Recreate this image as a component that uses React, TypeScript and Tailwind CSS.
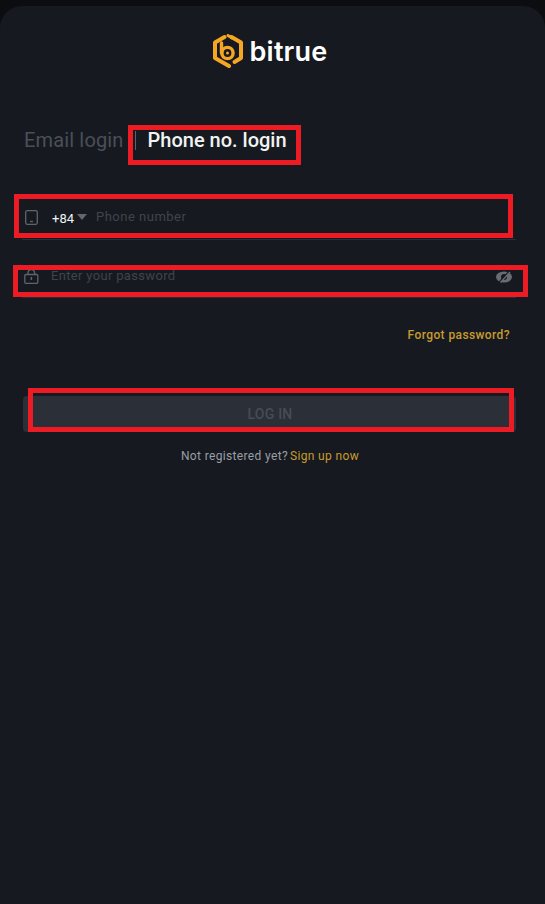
import React from "react";

const Logo = () => (
  <svg width="30" height="34" viewBox="0 0 30 34" fill="none">
    <path d="M11.500 3 L2 8.500 V24 L16 32" stroke="#f5a623" strokeWidth="4" strokeLinejoin="round" strokeLinecap="round" />
    <path d="M18.500 3 L28 8.500 V24 L21.500 28" stroke="#f5a623" strokeWidth="4" strokeLinejoin="round" strokeLinecap="round" />
    <path d="M15 1.500 L19 4" stroke="#f5a623" strokeWidth="3" strokeLinecap="round" />
    <path d="M8.500 9 V19" stroke="#f5a623" strokeWidth="3.400" strokeLinecap="round" />
    <circle cx="14.500" cy="19" r="5.600" stroke="#f5a623" strokeWidth="3.400" />
    <circle cx="14.500" cy="19" r="1.500" fill="#f5a623" />
  </svg>
);

const RedBox = ({ className }: { className: string }) => (
  <div className={`pointer-events-none absolute border-[5px] border-[#ed1c24] ${className}`} />
);

export default function App() {
  return (
    <div className="relative h-[904px] w-[545px] overflow-hidden bg-[#0c0d11] pt-[6px] font-['Roboto',sans-serif]">
      <div className="flex h-[898px] flex-col rounded-t-[22px] bg-[#161a20]">
        <div className="flex h-[62px] items-end justify-center gap-[7px] pr-[5px]">
          <Logo />
          <span className="mb-[-2px] font-['Inter',sans-serif] text-[27px] leading-[36px] font-semibold tracking-[0.2px] text-white">bitrue</span>
        </div>

        <div className="mt-[56px] flex h-[32px] items-center pl-[24px]">
          <span className="text-[20px] tracking-[0.15px] text-[#4a4f58]">Email login</span>
          <span className="ml-[11px] h-[19px] w-px bg-[#5c616a]" />
          <span className="ml-[12px] text-[20px] font-medium text-[#f1f2f3]">Phone no. login</span>
        </div>

        <div className="ml-[22px] mr-[29px] mt-[42px] flex h-[42px] items-center border-b border-[#2a2e35] pb-[3px]">
          <svg width="13" height="15" viewBox="0 0 13 15" fill="none" className="ml-[3px]">
            <rect x="0.700" y="0.700" width="11.600" height="13.600" rx="1.500" stroke="#5f646c" strokeWidth="1.300" />
            <path d="M5 11.500h3" stroke="#5f646c" strokeWidth="1.300" />
          </svg>
          <span className="ml-[14px] mt-[3px] text-[13px] text-[#f1f2f3]">+84</span>
          <span className="ml-[3px] h-0 w-0 border-x-[5.500px] border-t-[6px] border-x-transparent border-t-[#62666d]" />
          <span className="ml-[9px] text-[13px] tracking-[0.5px] text-[#3f444c]">Phone number</span>
        </div>

        <div className="ml-[22px] mr-[29px] mt-[16px] flex h-[42px] items-center border-b border-[#2a2e35] pb-[1px]">
          <svg width="15" height="15" viewBox="0 0 15 15" fill="none" className="ml-[2px] mt-[1px]">
            <rect x="0.800" y="5.500" width="13" height="8.800" rx="1" stroke="#5f646c" strokeWidth="1.300" />
            <path d="M4 5.500V4a3.300 3.300 0 0 1 6.600 0V5.500" stroke="#5f646c" strokeWidth="1.300" />
            <rect x="6.600" y="8" width="1.500" height="3" fill="#5f646c" />
          </svg>
          <span className="ml-[12px] flex-1 text-[13px] tracking-[0.33px] text-[#3f444c]">Enter your password</span>
          <svg width="16" height="12" viewBox="0 0 16 12" className="mr-[4px] mt-[1px]">
            <ellipse cx="8" cy="6" rx="8" ry="5.500" fill="#686d75" />
            <circle cx="8" cy="6" r="3" fill="#161a20" />
            <path d="M3 11.500 L13 0.500" stroke="#161a20" strokeWidth="1.500" />
            <path d="M4.500 11.500 L14 1" stroke="#686d75" strokeWidth="1.300" />
          </svg>
        </div>

        <div className="mr-[35px] mt-[28px] text-right text-[12px] font-medium tracking-[0.4px] text-[#c99a2e]">Forgot password?</div>

        <div className="ml-[23px] mr-[29px] mt-[52px] flex h-[36px] items-center justify-center rounded-[4px] bg-[#2a2f38] pl-[1px] text-[14px] font-medium tracking-[0.2px] text-[#474c55]">
          LOG IN
        </div>

        <div className="ml-[23px] mr-[29px] mt-[15px] flex items-center justify-center gap-[2px] pl-[1px] text-[12px] tracking-[0.35px]">
          <span className="text-[#9a9ea5]">Not registered yet?</span>
          <span className="text-[#c99a2e]">Sign up now</span>
        </div>
      </div>

      <RedBox className="left-[128px] top-[125px] h-[40px] w-[173px]" />
      <RedBox className="left-[14px] top-[194px] h-[44px] w-[499px]" />
      <RedBox className="left-[13px] top-[265px] h-[32px] w-[515px]" />
      <RedBox className="left-[28px] top-[388px] h-[44px] w-[486px]" />
    </div>
  );
}
